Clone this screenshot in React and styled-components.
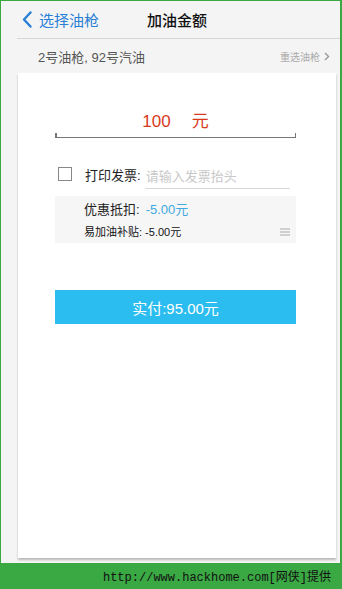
import React from "react";
import styled, { createGlobalStyle } from "styled-components";

const GlobalStyle = createGlobalStyle`
  html, body {
    margin: 0;
    padding: 0;
  }
  body {
    font-family: "Liberation Sans", "Noto Sans CJK SC", sans-serif;
    background: #3aa843;
  }
`;

function App() {
  return (
    <Frame>
      <GlobalStyle />
      <Screen>
        <NavBar>
          <BackButton>
            <svg width="10" height="17" viewBox="0 0 10 17">
              <path
                d="M8.5 1.5 L2 8.5 L8.5 15.5"
                fill="none"
                stroke="#2a7fd6"
                strokeWidth="2.4"
                strokeLinecap="round"
                strokeLinejoin="round"
              />
            </svg>
            <span>选择油枪</span>
          </BackButton>
          <NavTitle>加油金额</NavTitle>
        </NavBar>
        <SubRow>
          <PumpText>2号油枪, 92号汽油</PumpText>
          <Reselect>
            重选油枪
            <svg width="6" height="9" viewBox="0 0 6 9">
              <path d="M1 1 L4.5 4.5 L1 8" fill="none" stroke="#999" strokeWidth="1.4" />
            </svg>
          </Reselect>
        </SubRow>
        <Card>
          <AmountField>
            <AmountValue>100</AmountValue>
            <AmountUnit>元</AmountUnit>
          </AmountField>
          <InvoiceRow>
            <CheckBox />
            <InvoiceLabel>打印发票:</InvoiceLabel>
            <InvoiceInput placeholder="请输入发票抬头" />
          </InvoiceRow>
          <DiscountBox>
            <DiscountRow>
              优惠抵扣:<BlueValue>-5.00元</BlueValue>
            </DiscountRow>
            <SubsidyRow>
              <span>易加油补贴: -5.00元</span>
              <svg width="10" height="8" viewBox="0 0 10 8">
                <path d="M0 1 H10 M0 4 H10 M0 7 H10" stroke="#aaa" strokeWidth="1" />
              </svg>
            </SubsidyRow>
          </DiscountBox>
          <PayButton>实付:95.00元</PayButton>
        </Card>
      </Screen>
      <Footer>http://www.hackhome.com[网侠]提供</Footer>
    </Frame>
  );
}

export default App;

const Frame = styled.div`
  width: 342px;
  height: 589px;
  background: #3aa843;
  padding: 1px 2px 0 1px;
  box-sizing: border-box;
  display: flex;
  flex-direction: column;
`;

const Screen = styled.div`
  height: 562px;
  background: #f4f4f4;
  display: flex;
  flex-direction: column;
`;

const NavBar = styled.div`
  height: 37px;
  display: flex;
  align-items: center;
  position: relative;
  margin-left: 16px;
  border-bottom: 1px solid #d6d6d6;
`;

const BackButton = styled.div`
  display: flex;
  align-items: center;
  gap: 7px;
  padding-left: 5px;
  color: #2a7fd6;
  font-size: 15px;
`;

const NavTitle = styled.div`
  position: absolute;
  left: 130px;
  font-size: 15px;
  font-weight: 500;
  color: #111;
`;

const SubRow = styled.div`
  height: 34px;
  display: flex;
  align-items: center;
  justify-content: space-between;
  padding: 0 10px 0 37px;
`;

const PumpText = styled.div`
  font-size: 13px;
  color: #555;
`;

const Reselect = styled.div`
  display: flex;
  align-items: center;
  gap: 4px;
  font-size: 10px;
  color: #aaa;
`;

const Card = styled.div`
  flex: 1;
  margin: 0 4px 5px 17px;
  background: #fff;
  box-shadow: 0 2px 2px rgba(0, 0, 0, 0.25);
  padding: 35px 40px 0 37px;
  display: flex;
  flex-direction: column;
`;

const AmountField = styled.div`
  position: relative;
  height: 30px;
  display: flex;
  align-items: baseline;
  justify-content: center;
  gap: 21px;
  padding-top: 2px;
  box-sizing: border-box;
  line-height: 24px;
  border-bottom: 1.5px solid #777;
  color: #d9391c;

  &::before,
  &::after {
    content: "";
    position: absolute;
    bottom: 0;
    width: 1.5px;
    height: 4px;
    background: #777;
  }
  &::before {
    left: 0;
  }
  &::after {
    right: 0;
  }
`;

const AmountValue = styled.span`
  font-size: 17px;
`;

const AmountUnit = styled.span`
  font-size: 17px;
`;

const InvoiceRow = styled.div`
  margin-top: 25px;
  height: 22px;
  display: flex;
  align-items: center;
`;

const CheckBox = styled.div`
  width: 12px;
  height: 12px;
  border: 1.5px solid #888;
  margin-left: 3px;
  margin-right: 13px;
`;

const InvoiceLabel = styled.span`
  font-size: 13px;
  color: #222;
  margin-right: 4px;
`;

const InvoiceInput = styled.input`
  width: 144px;
  border: none;
  border-bottom: 1px solid #d8d8d8;
  outline: none;
  padding: 0 0 3px 1px;
  font-family: "Noto Sans CJK SC", sans-serif;
  font-size: 13px;
  background: transparent;
  margin-top: 6px;

  &::placeholder {
    color: #c8c8c8;
  }
`;

const DiscountBox = styled.div`
  margin-top: 11px;
  height: 47px;
  background: #f6f6f6;
  padding: 0 6px 0 29px;
  display: flex;
  flex-direction: column;
  justify-content: center;
  gap: 4px;
`;

const DiscountRow = styled.div`
  font-size: 13px;
  color: #222;
  line-height: 20px;
`;

const BlueValue = styled.span`
  color: #3fa9e0;
  margin-left: 6px;
`;

const SubsidyRow = styled.div`
  display: flex;
  align-items: center;
  justify-content: space-between;
  font-size: 11px;
  color: #111;
  line-height: 16px;
`;

const PayButton = styled.div`
  margin-top: 47px;
  height: 34px;
  background: #2cbdf0;
  color: #fff;
  font-size: 15px;
  display: flex;
  align-items: center;
  justify-content: center;
`;

const Footer = styled.div`
  flex: 1;
  display: flex;
  align-items: center;
  justify-content: flex-end;
  padding-right: 9px;
  font-family: "Liberation Mono", "Noto Sans CJK SC", monospace;
  font-size: 12px;
  color: #111;
`;
